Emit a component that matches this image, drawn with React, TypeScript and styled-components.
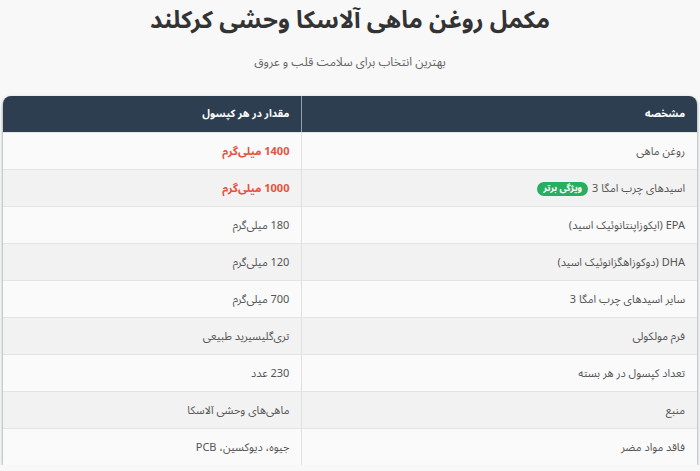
import React from 'react'
import styled, { createGlobalStyle } from 'styled-components';

const GlobalStyle = createGlobalStyle`
  html, body {
    margin: 0;
    padding: 0;
    background-color: #f8f8f8;
    font-family: "Noto Sans Arabic", "Noto Naskh Arabic", "DejaVu Sans", sans-serif;
  }
`;

const PageWrapper = styled.div`
  direction: rtl;
  display: flex;
  flex-direction: column;
  align-items: center;
  padding: 0 3px;
`;

const Title = styled.h1`
  margin: 0;
  font-size: 24px;
  line-height: 42px;
  font-weight: bold;
  color: #333;
`;

const SubTitle = styled.p`
  margin: 12px 0 0 0;
  font-size: 12px;
  line-height: 18px;
  color: #666;
`;

const Table = styled.table`
  width: 100%;
  margin-top: 24px;
  border-collapse: separate;
  border-spacing: 0;
  border-radius: 8px 8px 0 0;
  overflow: hidden;
  box-shadow: 0 2px 3px rgba(40, 55, 70, 0.55), 0 0 4px rgba(0, 0, 0, 0.08);
  font-size: 11px;
`;

const HeadCell = styled.th<{ $first?: boolean }>`
  background-color: #2c3e50;
  color: #fff;
  font-size: 10.5px;
  font-weight: bold;
  text-align: right;
  height: 36px;
  padding: 0 12px;
  border-left: ${(p) => (p.$first ? '1px solid #8fa0b0' : 'none')};
`;

const Row = styled.tr<{ $even: boolean }>`
  background-color: ${(p) => (p.$even ? '#f2f2f2' : '#fafafa')};
`;

const Cell = styled.td<{ $first?: boolean; $highlight?: boolean }>`
  height: 36px;
  padding: 0 12px;
  text-align: right;
  color: ${(p) => (p.$highlight ? '#e4533f' : '#555')};
  font-weight: ${(p) => (p.$highlight ? 'bold' : 'normal')};
  border-top: 1px solid #e4e4e4;
  border-left: ${(p) => (p.$first ? '1px solid #e0e0e0' : 'none')};
`;

const Badge = styled.span`
  display: inline-block;
  background-color: #27ae60;
  color: #fff;
  font-size: 9px;
  font-weight: bold;
  line-height: 14px;
  padding: 0 6px;
  border-radius: 8px;
  margin-right: 4px;
  vertical-align: middle;
`;

type Spec = {
  name: string;
  value: string;
  highlight?: boolean;
  badge?: string;
};

const specs: Spec[] = [
  { name: 'روغن ماهی', value: '1400 میلی‌گرم', highlight: true },
  { name: 'اسیدهای چرب امگا 3', value: '1000 میلی‌گرم', highlight: true, badge: 'ویژگی برتر' },
  { name: 'EPA (ایکوزاپنتانوئیک اسید)', value: '180 میلی‌گرم' },
  { name: 'DHA (دوکوزاهگزانوئیک اسید)', value: '120 میلی‌گرم' },
  { name: 'سایر اسیدهای چرب امگا 3', value: '700 میلی‌گرم' },
  { name: 'فرم مولکولی', value: 'تری‌گلیسیرید طبیعی' },
  { name: 'تعداد کپسول در هر بسته', value: '230 عدد' },
  { name: 'منبع', value: 'ماهی‌های وحشی آلاسکا' },
  { name: 'فاقد مواد مضر', value: 'جیوه، دیوکسین، PCB' },
]

const App = () => {
  return (
    <>
      <GlobalStyle />
      <PageWrapper>
        <Title>مکمل روغن ماهی آلاسکا وحشی کرکلند</Title>
        <SubTitle>بهترین انتخاب برای سلامت قلب و عروق</SubTitle>
        <Table>
          <thead>
            <tr>
              <HeadCell style={{ width: '57%' }} $first>مشخصه</HeadCell>
              <HeadCell>مقدار در هر کپسول</HeadCell>
            </tr>
          </thead>
          <tbody>
            {specs.map((s, i) => (
              <Row key={s.name} $even={i % 2 === 1}>
                <Cell $first>
                  {s.name}
                  {s.badge && <Badge>{s.badge}</Badge>}
                </Cell>
                <Cell $highlight={s.highlight}>{s.value}</Cell>
              </Row>
            ))}
          </tbody>
        </Table>
      </PageWrapper>
    </>
  );
}

export default App
